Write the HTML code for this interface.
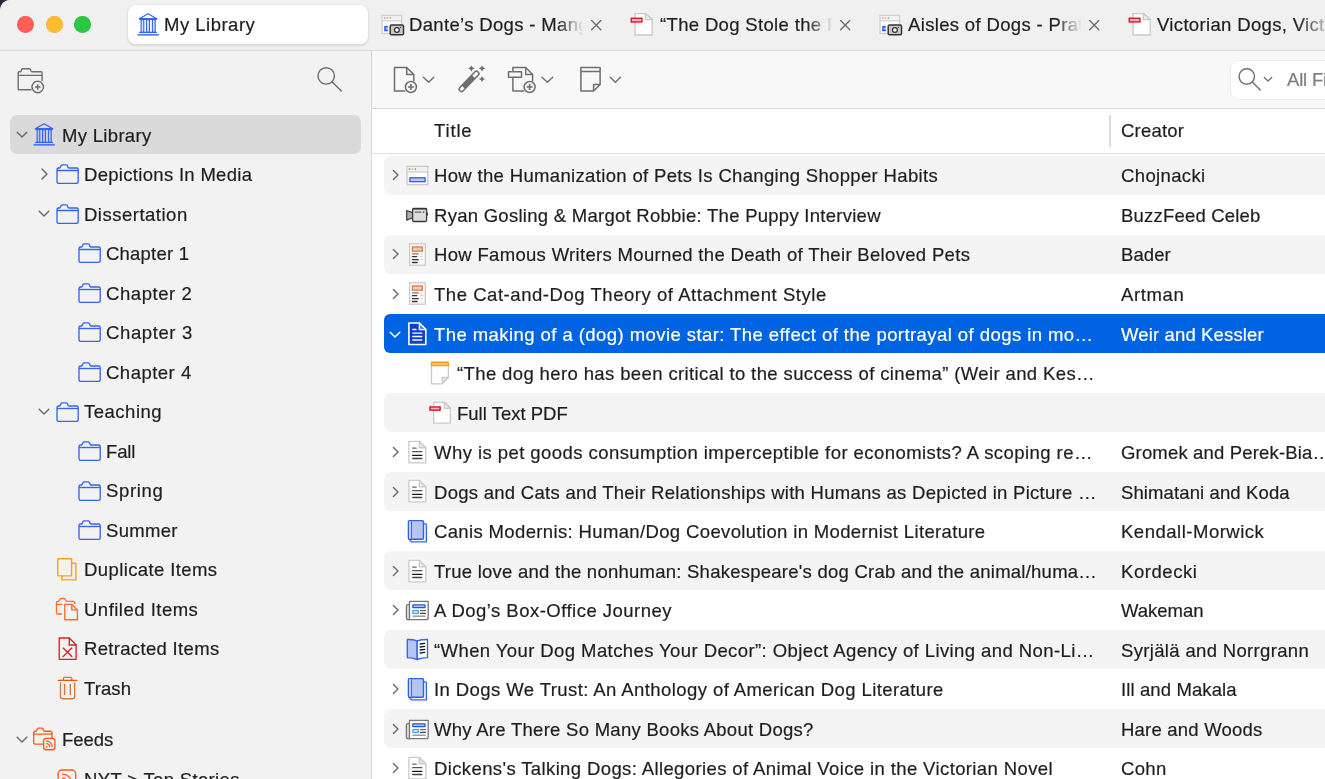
<!DOCTYPE html>
<html><head><meta charset="utf-8"><style>
html,body{margin:0;padding:0;width:1325px;height:779px;overflow:hidden;background:#232a36}
#win{position:absolute;left:0;top:0;width:1325px;height:779px;overflow:hidden;border-top-left-radius:10px;background:#f0f0f0}
.b{position:absolute}
.t{position:absolute;white-space:nowrap;font-family:"Liberation Sans",sans-serif;will-change:transform;-webkit-text-stroke:0.2px currentColor}
.i{position:absolute;overflow:visible}
</style></head><body>
<div id="win"><div class="b" style="left:0;top:0;width:1325px;height:50px;background:#f0f0f0;border-bottom:1px solid #d9d9d9"></div><div class="b" style="left:17.2px;top:15.7px;width:17px;height:17px;border-radius:50%;background:#ff5f57;box-shadow:inset 0 0 0 0.5px rgba(0,0,0,0.1)"></div><div class="b" style="left:45.5px;top:15.7px;width:17px;height:17px;border-radius:50%;background:#febc2e;box-shadow:inset 0 0 0 0.5px rgba(0,0,0,0.1)"></div><div class="b" style="left:73.8px;top:15.7px;width:17px;height:17px;border-radius:50%;background:#28c840;box-shadow:inset 0 0 0 0.5px rgba(0,0,0,0.1)"></div><div class="b" style="left:127.5px;top:4.8px;width:240px;height:39.4px;background:#fff;border-radius:7px;box-shadow:0 1px 3px rgba(0,0,0,0.16),0 0 0.5px rgba(0,0,0,0.2)"></div><svg class="i" style="left:134.00px;top:10.00px;" width="28" height="28" viewBox="0 0 28 28"><g fill="none" stroke="#3565ee" stroke-width="1.25" stroke-linejoin="round">
<path d="M5.3 8.7 L14.1 3.7 L22.8 8.7 Z" fill="#fff" fill-opacity="0"/>
<line x1="5.2" y1="9.3" x2="22.9" y2="9.3" stroke-width="1.5"/>
<rect x="7.1" y="9.6" width="2.7" height="12.6" fill="#3565ee" fill-opacity="0.22" stroke-width="1.1"/>
<rect x="12.5" y="9.6" width="3" height="12.6" fill="#3565ee" fill-opacity="0.22" stroke-width="1.1"/>
<rect x="18.4" y="9.6" width="2.8" height="12.6" fill="#3565ee" fill-opacity="0.22" stroke-width="1.1"/>
<line x1="5.2" y1="22.3" x2="22.9" y2="22.3" stroke-width="1.3"/>
</g><rect x="3.6" y="23.9" width="21.2" height="1.8" fill="#3565ee" opacity="0.85"/></svg><div class="t" style="left:164.00px;top:16px;font-size:18.5px;line-height:18.5px;letter-spacing:0.494px;color:#1e1e1e;">My Library</div><div class="t" style="left:409.3px;top:16px;width:180px;overflow:hidden;font-size:18.5px;line-height:18.5px;letter-spacing:0.34px;color:#1e1e1e;-webkit-mask-image:linear-gradient(90deg,#000 0,#000 148.5px,transparent 174.5px)">Dante’s Dogs - Mange Tales</div><svg class="i" style="left:378.00px;top:10.00px;" width="28" height="28" viewBox="0 0 28 28"><rect x="4.1" y="5.4" width="19.5" height="18" fill="#fff" stroke="#cdcdcd" stroke-width="1.3"/>
<rect x="4.75" y="6.05" width="18.2" height="4.7" fill="#f2f2f2"/>
<line x1="4.1" y1="10.8" x2="23.6" y2="10.8" stroke="#d2d2d2" stroke-width="1.3"/>
<circle cx="6.8" cy="7.9" r="0.8" fill="#eb8a8a"/><circle cx="9.5" cy="7.9" r="0.8" fill="#ebaa66"/><circle cx="12.4" cy="7.9" r="0.8" fill="#6cbf6a"/>
<path d="M9.8 16.6 H6.9 V20.5 H9.8" fill="#9cb6f6" stroke="#1b56e2" stroke-width="1.3"/>
<rect x="12.2" y="15.1" width="13.3" height="9.7" rx="1.4" fill="#c9c9c9" stroke="#333" stroke-width="1.5"/>
<circle cx="18.9" cy="20" r="2.4" fill="#fff" stroke="#333" stroke-width="1.3"/>
<circle cx="22.5" cy="17.4" r="0.6" fill="#333"/></svg><svg class="i" style="left:590.10px;top:18.50px;" width="12.5" height="12.5" viewBox="0 0 12.5 12.5"><path d="M1.6 1.6 L10.8 10.8 M10.8 1.6 L1.6 10.8" stroke="#6d6d6d" stroke-width="1.35" stroke-linecap="round"/></svg><div class="t" style="left:660.3px;top:16px;width:180px;overflow:hidden;font-size:18.5px;line-height:18.5px;letter-spacing:0.34px;color:#1e1e1e;-webkit-mask-image:linear-gradient(90deg,#000 0,#000 147px,transparent 173px)">“The Dog Stole the Film</div><svg class="i" style="left:627.00px;top:10.00px;" width="28" height="28" viewBox="0 0 28 28"><path d="M8.1 3.6 H18.3 L25.2 9.6 V25 H8.1 Z" fill="#fff" stroke="#c9c9c9" stroke-width="1.3" stroke-linejoin="round"/>
<path d="M18.3 3.6 V9.6 H25.2 Z" fill="#ececec" stroke="#c9c9c9" stroke-width="1.3" stroke-linejoin="round"/>
<rect x="4.25" y="8.25" width="10.70" height="3.70" fill="#f0b2ba" stroke="#d8121f" stroke-width="1.35" stroke-linejoin="miter"/></svg><svg class="i" style="left:838.60px;top:18.50px;" width="12.5" height="12.5" viewBox="0 0 12.5 12.5"><path d="M1.6 1.6 L10.8 10.8 M10.8 1.6 L1.6 10.8" stroke="#6d6d6d" stroke-width="1.35" stroke-linecap="round"/></svg><div class="t" style="left:907.8px;top:16px;width:180px;overflow:hidden;font-size:18.5px;line-height:18.5px;letter-spacing:0.34px;color:#1e1e1e;-webkit-mask-image:linear-gradient(90deg,#000 0,#000 147.5px,transparent 173.5px)">Aisles of Dogs - Pratt</div><svg class="i" style="left:875.50px;top:10.00px;" width="28" height="28" viewBox="0 0 28 28"><rect x="4.1" y="5.4" width="19.5" height="18" fill="#fff" stroke="#cdcdcd" stroke-width="1.3"/>
<rect x="4.75" y="6.05" width="18.2" height="4.7" fill="#f2f2f2"/>
<line x1="4.1" y1="10.8" x2="23.6" y2="10.8" stroke="#d2d2d2" stroke-width="1.3"/>
<circle cx="6.8" cy="7.9" r="0.8" fill="#eb8a8a"/><circle cx="9.5" cy="7.9" r="0.8" fill="#ebaa66"/><circle cx="12.4" cy="7.9" r="0.8" fill="#6cbf6a"/>
<path d="M9.8 16.6 H6.9 V20.5 H9.8" fill="#9cb6f6" stroke="#1b56e2" stroke-width="1.3"/>
<rect x="12.2" y="15.1" width="13.3" height="9.7" rx="1.4" fill="#c9c9c9" stroke="#333" stroke-width="1.5"/>
<circle cx="18.9" cy="20" r="2.4" fill="#fff" stroke="#333" stroke-width="1.3"/>
<circle cx="22.5" cy="17.4" r="0.6" fill="#333"/></svg><svg class="i" style="left:1087.70px;top:18.50px;" width="12.5" height="12.5" viewBox="0 0 12.5 12.5"><path d="M1.6 1.6 L10.8 10.8 M10.8 1.6 L1.6 10.8" stroke="#6d6d6d" stroke-width="1.35" stroke-linecap="round"/></svg><div class="t" style="left:1157.3px;top:16px;width:170px;overflow:hidden;font-size:18.5px;line-height:18.5px;letter-spacing:0.34px;color:#1e1e1e;-webkit-mask-image:linear-gradient(90deg,#000 0,#000 140px,transparent 178px)">Victorian Dogs, Victorian Men</div><svg class="i" style="left:1125.00px;top:10.00px;" width="28" height="28" viewBox="0 0 28 28"><path d="M8.1 3.6 H18.3 L25.2 9.6 V25 H8.1 Z" fill="#fff" stroke="#c9c9c9" stroke-width="1.3" stroke-linejoin="round"/>
<path d="M18.3 3.6 V9.6 H25.2 Z" fill="#ececec" stroke="#c9c9c9" stroke-width="1.3" stroke-linejoin="round"/>
<rect x="4.25" y="8.25" width="10.70" height="3.70" fill="#f0b2ba" stroke="#d8121f" stroke-width="1.35" stroke-linejoin="miter"/></svg><div class="b" style="left:0;top:51px;width:371px;height:728px;background:#f2f2f2"></div><div class="b" style="left:371px;top:51px;width:1px;height:728px;background:#d6d6d6"></div><svg class="i" style="left:10.00px;top:60.00px;" width="40" height="40" viewBox="0 0 40 40"><g fill="none" stroke="#6e6e6e" stroke-width="1.4" stroke-linejoin="round">
<path d="M21.6 29.8 H9.1 Q8.2 29.8 8.2 28.9 V12.7 Q8.2 11.8 9.1 11.8 H10.2 Q10.8 11.8 11.1 11.2 L11.6 9.6 Q12 8.7 12.8 8.7 H19.2 Q20 8.7 20.4 9.5 L21 11 Q21.4 11.8 22.2 11.8 H31.2 Q32.1 11.8 32.1 12.7 V21.3"/>
<line x1="8.2" y1="15.4" x2="32.1" y2="15.4"/>
<circle cx="27.7" cy="27" r="5.7"/>
<path d="M24.9 27 H30.5 M27.7 24.2 V29.8" stroke-width="1.5"/></g></svg><svg class="i" style="left:310.00px;top:60.00px;" width="40" height="40" viewBox="0 0 40 40"><circle cx="16.2" cy="15.9" r="8.2" fill="none" stroke="#6e6e6e" stroke-width="1.45"/><line x1="22.00" y1="21.70" x2="31.33" y2="31.03" stroke="#6e6e6e" stroke-width="1.45" stroke-linecap="round"/></svg><div class="b" style="left:372px;top:51px;width:953px;height:57px;background:#f8f8f8;border-bottom:1px solid #d9d9d9"></div><svg class="i" style="left:388.00px;top:62.00px;" width="50" height="36" viewBox="0 0 50 36"><g fill="none" stroke="#6e6e6e" stroke-width="1.5" stroke-linejoin="round">
<path d="M17.5 29.1 H6.5 V5.5 H18.7 L25.8 12.6 V19.6"/>
<path d="M18.7 5.5 V12.6 H25.8"/>
<circle cx="22.9" cy="25" r="5.5"/>
<path d="M19.9 25 H25.9 M22.9 22.1 V27.9" stroke-width="1.7"/></g><path d="M35.4 15.2 L40.6 20.3 L45.80 15.2" fill="none" stroke="#6e6e6e" stroke-width="1.4" stroke-linecap="round" stroke-linejoin="round"/></svg><svg class="i" style="left:452.00px;top:62.00px;" width="40" height="36" viewBox="0 0 40 36"><g transform="translate(17 19.3) rotate(-46)">
<rect x="-13" y="-2.35" width="26" height="4.7" rx="1.9" fill="none" stroke="#6e6e6e" stroke-width="1.5"/>
<rect x="-8.2" y="-2.35" width="14.6" height="4.7" fill="#6e6e6e"/></g>
<g fill="#6e6e6e"><path d="M19.4 3.3 Q19.95 5.95 22.599999999999998 6.5 Q19.95 7.05 19.4 9.7 Q18.849999999999998 7.05 16.2 6.5 Q18.849999999999998 5.95 19.4 3.3 Z"/><path d="M30 3.3 Q30.55 5.95 33.2 6.5 Q30.55 7.05 30 9.7 Q29.45 7.05 26.8 6.5 Q29.45 5.95 30 3.3 Z"/><path d="M30 13.900000000000002 Q30.55 16.55 33.2 17.1 Q30.55 17.650000000000002 30 20.3 Q29.45 17.650000000000002 26.8 17.1 Q29.45 16.55 30 13.900000000000002 Z"/></g></svg><svg class="i" style="left:503.00px;top:62.00px;" width="54" height="36" viewBox="0 0 54 36"><g fill="none" stroke="#6e6e6e" stroke-width="1.5" stroke-linejoin="round">
<path d="M21.2 29.1 H9.9 V15.3"/><path d="M9.9 9.7 V5.5 H22.7 L29.6 12.6 V19.6"/>
<path d="M22.7 5.5 V12.6 H29.6"/>
<rect x="5.5" y="9.7" width="13" height="5.6"/>
<circle cx="26.6" cy="25" r="5.5"/>
<path d="M23.6 25 H29.6 M26.6 22.1 V27.9" stroke-width="1.7"/></g><path d="M39 15.2 L44.4 20.3 L49.80 15.2" fill="none" stroke="#6e6e6e" stroke-width="1.4" stroke-linecap="round" stroke-linejoin="round"/></svg><svg class="i" style="left:574.00px;top:62.00px;" width="52" height="36" viewBox="0 0 52 36"><g fill="none" stroke="#6e6e6e" stroke-width="1.5" stroke-linejoin="round">
<path d="M6.9 5.5 H26.1 V22.4 L19.6 29.1 H6.9 Z"/>
<line x1="6.9" y1="9.5" x2="26.1" y2="9.5"/>
<path d="M19.6 29.1 V22.4 H26.1"/></g><path d="M36.3 15.2 L41.4 20.3 L46.50 15.2" fill="none" stroke="#6e6e6e" stroke-width="1.4" stroke-linecap="round" stroke-linejoin="round"/></svg><div class="b" style="left:1231px;top:60.5px;width:110px;height:38px;background:#fff;border-radius:7px;box-shadow:0 0 0 0.6px #e6e6e6"></div><svg class="i" style="left:1225.00px;top:55.00px;" width="60" height="50" viewBox="0 0 60 50"><circle cx="21.8" cy="21.5" r="7.7" fill="none" stroke="#6e6e6e" stroke-width="1.4"/><line x1="27.24" y1="26.94" x2="35.24" y2="34.94" stroke="#6e6e6e" stroke-width="1.4" stroke-linecap="round"/><path d="M39.3 22.5 L43 26 L46.7 22.5" fill="none" stroke="#6e6e6e" stroke-width="1.3" stroke-linecap="round" stroke-linejoin="round"/></svg><div class="t" style="left:1287.00px;top:71px;font-size:18.5px;line-height:18.5px;letter-spacing:-0.2px;color:#7d7d7d;">All Fields &amp; Tags</div><div class="b" style="left:372px;top:109px;width:953px;height:44px;background:#fff;border-bottom:1px solid #e1e1e1"></div><div class="b" style="left:372px;top:154px;width:953px;height:625px;background:#fff"></div><div class="t" style="left:434.00px;top:122px;font-size:18.5px;line-height:18.5px;letter-spacing:0.84px;color:#1e1e1e;">Title</div><div class="b" style="left:1109.4px;top:115px;width:1.2px;height:31.5px;background:#dcdcdc"></div><div class="t" style="left:1121.30px;top:122px;font-size:18.5px;line-height:18.5px;letter-spacing:0.206px;color:#1e1e1e;">Creator</div><div class="b" style="left:10.3px;top:114.8px;width:350.7px;height:39.1px;background:#dadada;border-radius:7px"></div><svg class="i" style="left:15.50px;top:130.00px;" width="12" height="9" viewBox="0 0 12 9"><path d="M1.2 2.3 L6 7 L10.8 2.3" fill="none" stroke="#6b6b6b" stroke-width="1.45" stroke-linecap="round" stroke-linejoin="round"/></svg><svg class="i" style="left:30.40px;top:119.50px;" width="28" height="28" viewBox="0 0 28 28"><g fill="none" stroke="#3565ee" stroke-width="1.25" stroke-linejoin="round">
<path d="M5.3 8.7 L14.1 3.7 L22.8 8.7 Z" fill="#fff" fill-opacity="0"/>
<line x1="5.2" y1="9.3" x2="22.9" y2="9.3" stroke-width="1.5"/>
<rect x="7.1" y="9.6" width="2.7" height="12.6" fill="#3565ee" fill-opacity="0.22" stroke-width="1.1"/>
<rect x="12.5" y="9.6" width="3" height="12.6" fill="#3565ee" fill-opacity="0.22" stroke-width="1.1"/>
<rect x="18.4" y="9.6" width="2.8" height="12.6" fill="#3565ee" fill-opacity="0.22" stroke-width="1.1"/>
<line x1="5.2" y1="22.3" x2="22.9" y2="22.3" stroke-width="1.3"/>
</g><rect x="3.6" y="23.9" width="21.2" height="1.8" fill="#3565ee" opacity="0.85"/></svg><div class="t" style="left:61.50px;top:127px;font-size:18.5px;line-height:18.5px;letter-spacing:0.316px;color:#1e1e1e;">My Library</div><svg class="i" style="left:39.30px;top:167.33px;" width="10" height="14" viewBox="0 0 10 14"><path d="M3 2 L8 7 L3 12" fill="none" stroke="#6b6b6b" stroke-width="1.45" stroke-linecap="round" stroke-linejoin="round"/></svg><svg class="i" style="left:51.70px;top:159.33px;" width="30" height="30" viewBox="0 0 30 30"><g fill="none" stroke="#3565ee" stroke-width="1.35" stroke-linejoin="round">
<path d="M5 10.5 Q5 9 6.5 9 L7.3 9 Q7.9 9 8.2 8.4 L9 6.6 Q9.4 5.8 10.2 5.8 L14.2 5.8 Q15 5.8 15.3 6.6 L16.1 8.4 Q16.4 9 17.1 9 L24.7 9 Q26.2 9 26.2 10.5 L26.2 22.8 Q26.2 24.3 24.7 24.3 L6.5 24.3 Q5 24.3 5 22.8 Z"/>
<line x1="5" y1="11.5" x2="26.2" y2="11.5"/></g></svg><div class="t" style="left:83.90px;top:166px;font-size:18.5px;line-height:18.5px;letter-spacing:0.307px;color:#1e1e1e;">Depictions In Media</div><svg class="i" style="left:38.30px;top:209.06px;" width="12" height="9" viewBox="0 0 12 9"><path d="M1.2 2.3 L6 7 L10.8 2.3" fill="none" stroke="#6b6b6b" stroke-width="1.45" stroke-linecap="round" stroke-linejoin="round"/></svg><svg class="i" style="left:51.70px;top:198.86px;" width="30" height="30" viewBox="0 0 30 30"><g fill="none" stroke="#3565ee" stroke-width="1.35" stroke-linejoin="round">
<path d="M5 10.5 Q5 9 6.5 9 L7.3 9 Q7.9 9 8.2 8.4 L9 6.6 Q9.4 5.8 10.2 5.8 L14.2 5.8 Q15 5.8 15.3 6.6 L16.1 8.4 Q16.4 9 17.1 9 L24.7 9 Q26.2 9 26.2 10.5 L26.2 22.8 Q26.2 24.3 24.7 24.3 L6.5 24.3 Q5 24.3 5 22.8 Z"/>
<line x1="5" y1="11.5" x2="26.2" y2="11.5"/></g></svg><div class="t" style="left:83.90px;top:206px;font-size:18.5px;line-height:18.5px;letter-spacing:0.502px;color:#1e1e1e;">Dissertation</div><svg class="i" style="left:74.00px;top:238.39px;" width="30" height="30" viewBox="0 0 30 30"><g fill="none" stroke="#3565ee" stroke-width="1.35" stroke-linejoin="round">
<path d="M5 10.5 Q5 9 6.5 9 L7.3 9 Q7.9 9 8.2 8.4 L9 6.6 Q9.4 5.8 10.2 5.8 L14.2 5.8 Q15 5.8 15.3 6.6 L16.1 8.4 Q16.4 9 17.1 9 L24.7 9 Q26.2 9 26.2 10.5 L26.2 22.8 Q26.2 24.3 24.7 24.3 L6.5 24.3 Q5 24.3 5 22.8 Z"/>
<line x1="5" y1="11.5" x2="26.2" y2="11.5"/></g></svg><div class="t" style="left:106.20px;top:245px;font-size:18.5px;line-height:18.5px;letter-spacing:0.216px;color:#1e1e1e;">Chapter 1</div><svg class="i" style="left:74.00px;top:277.92px;" width="30" height="30" viewBox="0 0 30 30"><g fill="none" stroke="#3565ee" stroke-width="1.35" stroke-linejoin="round">
<path d="M5 10.5 Q5 9 6.5 9 L7.3 9 Q7.9 9 8.2 8.4 L9 6.6 Q9.4 5.8 10.2 5.8 L14.2 5.8 Q15 5.8 15.3 6.6 L16.1 8.4 Q16.4 9 17.1 9 L24.7 9 Q26.2 9 26.2 10.5 L26.2 22.8 Q26.2 24.3 24.7 24.3 L6.5 24.3 Q5 24.3 5 22.8 Z"/>
<line x1="5" y1="11.5" x2="26.2" y2="11.5"/></g></svg><div class="t" style="left:106.20px;top:285px;font-size:18.5px;line-height:18.5px;letter-spacing:0.565px;color:#1e1e1e;">Chapter 2</div><svg class="i" style="left:74.00px;top:317.45px;" width="30" height="30" viewBox="0 0 30 30"><g fill="none" stroke="#3565ee" stroke-width="1.35" stroke-linejoin="round">
<path d="M5 10.5 Q5 9 6.5 9 L7.3 9 Q7.9 9 8.2 8.4 L9 6.6 Q9.4 5.8 10.2 5.8 L14.2 5.8 Q15 5.8 15.3 6.6 L16.1 8.4 Q16.4 9 17.1 9 L24.7 9 Q26.2 9 26.2 10.5 L26.2 22.8 Q26.2 24.3 24.7 24.3 L6.5 24.3 Q5 24.3 5 22.8 Z"/>
<line x1="5" y1="11.5" x2="26.2" y2="11.5"/></g></svg><div class="t" style="left:106.20px;top:324px;font-size:18.5px;line-height:18.5px;letter-spacing:0.615px;color:#1e1e1e;">Chapter 3</div><svg class="i" style="left:74.00px;top:356.98px;" width="30" height="30" viewBox="0 0 30 30"><g fill="none" stroke="#3565ee" stroke-width="1.35" stroke-linejoin="round">
<path d="M5 10.5 Q5 9 6.5 9 L7.3 9 Q7.9 9 8.2 8.4 L9 6.6 Q9.4 5.8 10.2 5.8 L14.2 5.8 Q15 5.8 15.3 6.6 L16.1 8.4 Q16.4 9 17.1 9 L24.7 9 Q26.2 9 26.2 10.5 L26.2 22.8 Q26.2 24.3 24.7 24.3 L6.5 24.3 Q5 24.3 5 22.8 Z"/>
<line x1="5" y1="11.5" x2="26.2" y2="11.5"/></g></svg><div class="t" style="left:106.20px;top:364px;font-size:18.5px;line-height:18.5px;letter-spacing:0.49px;color:#1e1e1e;">Chapter 4</div><svg class="i" style="left:38.30px;top:406.71px;" width="12" height="9" viewBox="0 0 12 9"><path d="M1.2 2.3 L6 7 L10.8 2.3" fill="none" stroke="#6b6b6b" stroke-width="1.45" stroke-linecap="round" stroke-linejoin="round"/></svg><svg class="i" style="left:51.70px;top:396.51px;" width="30" height="30" viewBox="0 0 30 30"><g fill="none" stroke="#3565ee" stroke-width="1.35" stroke-linejoin="round">
<path d="M5 10.5 Q5 9 6.5 9 L7.3 9 Q7.9 9 8.2 8.4 L9 6.6 Q9.4 5.8 10.2 5.8 L14.2 5.8 Q15 5.8 15.3 6.6 L16.1 8.4 Q16.4 9 17.1 9 L24.7 9 Q26.2 9 26.2 10.5 L26.2 22.8 Q26.2 24.3 24.7 24.3 L6.5 24.3 Q5 24.3 5 22.8 Z"/>
<line x1="5" y1="11.5" x2="26.2" y2="11.5"/></g></svg><div class="t" style="left:83.90px;top:403px;font-size:18.5px;line-height:18.5px;letter-spacing:0.511px;color:#1e1e1e;">Teaching</div><svg class="i" style="left:74.00px;top:436.04px;" width="30" height="30" viewBox="0 0 30 30"><g fill="none" stroke="#3565ee" stroke-width="1.35" stroke-linejoin="round">
<path d="M5 10.5 Q5 9 6.5 9 L7.3 9 Q7.9 9 8.2 8.4 L9 6.6 Q9.4 5.8 10.2 5.8 L14.2 5.8 Q15 5.8 15.3 6.6 L16.1 8.4 Q16.4 9 17.1 9 L24.7 9 Q26.2 9 26.2 10.5 L26.2 22.8 Q26.2 24.3 24.7 24.3 L6.5 24.3 Q5 24.3 5 22.8 Z"/>
<line x1="5" y1="11.5" x2="26.2" y2="11.5"/></g></svg><div class="t" style="left:106.20px;top:443px;font-size:18.5px;line-height:18.5px;letter-spacing:-0.126px;color:#1e1e1e;">Fall</div><svg class="i" style="left:74.00px;top:475.57px;" width="30" height="30" viewBox="0 0 30 30"><g fill="none" stroke="#3565ee" stroke-width="1.35" stroke-linejoin="round">
<path d="M5 10.5 Q5 9 6.5 9 L7.3 9 Q7.9 9 8.2 8.4 L9 6.6 Q9.4 5.8 10.2 5.8 L14.2 5.8 Q15 5.8 15.3 6.6 L16.1 8.4 Q16.4 9 17.1 9 L24.7 9 Q26.2 9 26.2 10.5 L26.2 22.8 Q26.2 24.3 24.7 24.3 L6.5 24.3 Q5 24.3 5 22.8 Z"/>
<line x1="5" y1="11.5" x2="26.2" y2="11.5"/></g></svg><div class="t" style="left:106.20px;top:482px;font-size:18.5px;line-height:18.5px;letter-spacing:0.66px;color:#1e1e1e;">Spring</div><svg class="i" style="left:74.00px;top:515.10px;" width="30" height="30" viewBox="0 0 30 30"><g fill="none" stroke="#3565ee" stroke-width="1.35" stroke-linejoin="round">
<path d="M5 10.5 Q5 9 6.5 9 L7.3 9 Q7.9 9 8.2 8.4 L9 6.6 Q9.4 5.8 10.2 5.8 L14.2 5.8 Q15 5.8 15.3 6.6 L16.1 8.4 Q16.4 9 17.1 9 L24.7 9 Q26.2 9 26.2 10.5 L26.2 22.8 Q26.2 24.3 24.7 24.3 L6.5 24.3 Q5 24.3 5 22.8 Z"/>
<line x1="5" y1="11.5" x2="26.2" y2="11.5"/></g></svg><div class="t" style="left:106.20px;top:522px;font-size:18.5px;line-height:18.5px;letter-spacing:0.3px;color:#1e1e1e;">Summer</div><svg class="i" style="left:52.00px;top:554.03px;" width="30" height="30" viewBox="0 0 30 30"><g fill="none" stroke="#f6a11e" stroke-width="1.4" stroke-linejoin="round">
<rect x="5.75" y="4.7" width="13.85" height="17.2" rx="0.6"/>
<path d="M19.6 9.2 H23.9 V25.9 H9.9 V21.9"/></g></svg><div class="t" style="left:83.90px;top:561px;font-size:18.5px;line-height:18.5px;letter-spacing:0.398px;color:#1e1e1e;">Duplicate Items</div><svg class="i" style="left:52.00px;top:593.96px;" width="30" height="30" viewBox="0 0 30 30"><g fill="none" stroke="#ff6a30" stroke-width="1.35" stroke-linejoin="round" stroke-linecap="round">
<path d="M9.6 20 H5.8 Q4.5 20 4.5 18.7 V8.7 Q4.5 7.4 5.8 7.4 H6.3 Q6.9 7.4 7.2 6.8 L8 5.3 Q8.4 4.5 9.2 4.5 H12 Q12.8 4.5 13.2 5.3 L14 6.8 Q14.3 7.4 15 7.4 H21.4 Q22.7 7.4 22.7 8.7 V9.4"/>
<line x1="4.5" y1="10.3" x2="9.6" y2="10.3"/>
<path d="M12.8 10.3 H19.8 L25.4 15.9 V25.7 H12.8 Z"/>
<path d="M19.8 10.3 V15.9 H25.4"/></g></svg><div class="t" style="left:83.90px;top:601px;font-size:18.5px;line-height:18.5px;letter-spacing:0.489px;color:#1e1e1e;">Unfiled Items</div><svg class="i" style="left:52.00px;top:632.99px;" width="30" height="30" viewBox="0 0 30 30"><g fill="none" stroke="#d9212c" stroke-width="1.35" stroke-linejoin="round" stroke-linecap="round">
<path d="M7.2 5 H17.3 L24.1 12 V26.3 H7.2 Z"/>
<path d="M17.3 5 V12 H24.1"/>
<path d="M11.2 15.1 L19.8 23.6 M19.8 15.1 L11.2 23.6"/></g></svg><div class="t" style="left:83.90px;top:640px;font-size:18.5px;line-height:18.5px;letter-spacing:0.327px;color:#1e1e1e;">Retracted Items</div><svg class="i" style="left:52.00px;top:673.02px;" width="30" height="30" viewBox="0 0 30 30"><g fill="none" stroke="#d9773f" stroke-width="1.35" stroke-linecap="round" stroke-linejoin="round">
<path d="M11.4 7.2 V5.4 Q11.4 4.4 12.4 4.4 H18.8 Q19.8 4.4 19.8 5.4 V7.2"/>
<path d="M8.5 10 V23.4 Q8.5 25.7 10.8 25.7 H20.4 Q22.7 25.7 22.7 23.4 V10"/>
<line x1="12.6" y1="11.3" x2="12.6" y2="21.6"/><line x1="18.3" y1="11.3" x2="18.3" y2="21.6"/>
</g><line x1="6.3" y1="7.4" x2="24.8" y2="7.4" stroke="#d85a1a" stroke-width="1.4" stroke-linecap="round"/></svg><div class="t" style="left:83.90px;top:680px;font-size:18.5px;line-height:18.5px;letter-spacing:0.09px;color:#1e1e1e;">Trash</div><svg class="i" style="left:15.60px;top:735.30px;" width="12" height="9" viewBox="0 0 12 9"><path d="M1.2 2.3 L6 7 L10.8 2.3" fill="none" stroke="#6b6b6b" stroke-width="1.45" stroke-linecap="round" stroke-linejoin="round"/></svg><svg class="i" style="left:29.00px;top:724.00px;" width="32" height="32" viewBox="0 0 32 32"><g fill="none" stroke="#ff5a1f" stroke-width="1.35" stroke-linejoin="round" stroke-linecap="round">
<path d="M14.2 20.1 H6.2 Q4.7 20.1 4.7 18.6 V8.7 Q4.7 7.2 6.2 7.2 H6.8 Q7.4 7.2 7.7 6.6 L8.4 4.9 Q8.8 4.1 9.6 4.1 H12.9 Q13.7 4.1 14.1 4.9 L14.8 6.6 Q15.1 7.2 15.8 7.2 H21.5 Q23 7.2 23 8.7 V13.6"/>
<line x1="4.7" y1="10.1" x2="23" y2="10.1"/></g><rect x="14.6" y="14.4" width="11.3" height="11.3" rx="2.49" fill="none" stroke="#ff5a1f" stroke-width="1.35"/>
<circle cx="17.76" cy="22.76" r="0.85" fill="#ff5a1f"/>
<path d="M17.54 19.71 A3.05 3.05 0 0 1 20.59 22.76" fill="none" stroke="#ff5a1f" stroke-width="1.3" stroke-linecap="round"/>
<path d="M17.54 17.11 A5.65 5.65 0 0 1 23.19 22.76" fill="none" stroke="#ff5a1f" stroke-width="1.3" stroke-linecap="round"/></svg><div class="t" style="left:61.50px;top:731px;font-size:18.5px;line-height:18.5px;letter-spacing:-0.06px;color:#1e1e1e;">Feeds</div><svg class="i" style="left:52.00px;top:759.00px;" width="40" height="30" viewBox="0 0 40 30"><rect x="6.1000000000000005" y="11.0" width="17.6" height="17.6" rx="3.87" fill="none" stroke="#ff5a1f" stroke-width="1.35"/>
<circle cx="11.03" cy="24.02" r="1.32" fill="#ff5a1f"/>
<path d="M10.68 19.27 A4.75 4.75 0 0 1 15.43 24.02" fill="none" stroke="#ff5a1f" stroke-width="1.3" stroke-linecap="round"/>
<path d="M10.68 15.22 A8.80 8.80 0 0 1 19.48 24.02" fill="none" stroke="#ff5a1f" stroke-width="1.3" stroke-linecap="round"/></svg><div class="t" style="left:83.90px;top:771px;font-size:18.5px;line-height:18.5px;letter-spacing:0.34px;color:#1e1e1e;">NYT &gt; Top Stories</div><div class="b" style="left:383.7px;top:155.80px;width:960px;height:39.2px;background:#f4f4f4;border-radius:7px"></div><svg class="i" style="left:389.60px;top:168.40px;" width="10" height="14" viewBox="0 0 10 14"><path d="M3.4000000000000004 2.4000000000000004 L8 7 L3.4000000000000004 11.6" fill="none" stroke="#6b6b6b" stroke-width="1.4" stroke-linecap="round" stroke-linejoin="round"/></svg><svg class="i" style="left:403.00px;top:161.20px;" width="28" height="28" viewBox="0 0 28 28"><rect x="4" y="5.4" width="20.8" height="18.2" fill="#fff" stroke="#c9c9c9" stroke-width="1.3"/>
<rect x="4.65" y="6.05" width="19.5" height="4.9" fill="#f1f1f1"/>
<line x1="4" y1="11" x2="24.8" y2="11" stroke="#cdcdcd" stroke-width="1.3"/>
<circle cx="6.5" cy="8.1" r="0.8" fill="#e2504c"/><circle cx="9.4" cy="8.1" r="0.8" fill="#e9a13b"/><circle cx="12.4" cy="8.1" r="0.8" fill="#4aaa48"/>
<rect x="6.9" y="16.8" width="15.2" height="3.9" fill="#b7c8f6" stroke="#1b56e2" stroke-width="1.2"/></svg><div class="t" style="left:434.00px;top:167px;font-size:18.5px;line-height:18.5px;letter-spacing:0.34px;color:#1e1e1e;">How the Humanization of Pets Is Changing Shopper Habits</div><div class="t" style="left:1121.30px;top:167px;font-size:18.5px;line-height:18.5px;letter-spacing:0.365px;color:#1e1e1e;">Chojnacki</div><svg class="i" style="left:403.00px;top:201.03px;" width="28" height="28" viewBox="0 0 28 28"><path d="M3.7 9.5 L9.6 11.6 V16.8 L3.7 19.1 Z" fill="#b0b0b0" stroke="#3a3a3a" stroke-width="1.2" stroke-linejoin="round"/>
<path d="M23.4 10.9 Q26.3 13.1 23.4 15.2 Z" fill="#333" stroke="#333" stroke-width="0.8"/>
<rect x="9.6" y="7.5" width="14" height="13" rx="1.2" fill="#dcdcdc" stroke="#393939" stroke-width="1.3"/>
<line x1="9.8" y1="8" x2="23.4" y2="8" stroke="#222" stroke-width="0.8"/>
<line x1="12.3" y1="11.1" x2="18" y2="11.1" stroke="#666" stroke-width="1.3" stroke-linecap="round"/>
<circle cx="20.6" cy="11.2" r="0.85" fill="#e22"/></svg><div class="t" style="left:434.00px;top:207px;font-size:18.5px;line-height:18.5px;letter-spacing:0.269px;color:#1e1e1e;">Ryan Gosling &amp; Margot Robbie: The Puppy Interview</div><div class="t" style="left:1121.30px;top:207px;font-size:18.5px;line-height:18.5px;letter-spacing:0.202px;color:#1e1e1e;">BuzzFeed Celeb</div><div class="b" style="left:383.7px;top:234.86px;width:960px;height:39.2px;background:#f4f4f4;border-radius:7px"></div><svg class="i" style="left:389.60px;top:247.46px;" width="10" height="14" viewBox="0 0 10 14"><path d="M3.4000000000000004 2.4000000000000004 L8 7 L3.4000000000000004 11.6" fill="none" stroke="#6b6b6b" stroke-width="1.4" stroke-linecap="round" stroke-linejoin="round"/></svg><svg class="i" style="left:403.00px;top:239.96px;" width="28" height="28" viewBox="0 0 28 28"><rect x="6.65" y="3.8" width="15.65" height="21.4" fill="#fff" stroke="#c9c9c9" stroke-width="1.3"/>
<rect x="9.4" y="6.9" width="10" height="4.3" fill="#f3cbb0" stroke="#d9773f" stroke-width="1.2"/>
<g stroke-width="1.3" stroke-linecap="round">
<line x1="9.4" y1="13.8" x2="15.3" y2="13.8" stroke="#7a7a7a"/>
<line x1="9.4" y1="16.7" x2="13.7" y2="16.7" stroke="#333"/>
<line x1="9.4" y1="19.6" x2="15.3" y2="19.6" stroke="#333"/>
<line x1="9.4" y1="22.5" x2="14.2" y2="22.5" stroke="#333"/>
<line x1="17.7" y1="13.8" x2="19.5" y2="13.8" stroke="#d6d6d6"/>
<line x1="17.7" y1="16.7" x2="19.5" y2="16.7" stroke="#d6d6d6"/>
<line x1="17.7" y1="19.6" x2="19.5" y2="19.6" stroke="#d6d6d6"/></g></svg><div class="t" style="left:434.00px;top:246px;font-size:18.5px;line-height:18.5px;letter-spacing:0.322px;color:#1e1e1e;">How Famous Writers Mourned the Death of Their Beloved Pets</div><div class="t" style="left:1121.30px;top:246px;font-size:18.5px;line-height:18.5px;letter-spacing:0.09px;color:#1e1e1e;">Bader</div><svg class="i" style="left:389.60px;top:286.99px;" width="10" height="14" viewBox="0 0 10 14"><path d="M3.4000000000000004 2.4000000000000004 L8 7 L3.4000000000000004 11.6" fill="none" stroke="#6b6b6b" stroke-width="1.4" stroke-linecap="round" stroke-linejoin="round"/></svg><svg class="i" style="left:403.00px;top:279.49px;" width="28" height="28" viewBox="0 0 28 28"><rect x="6.65" y="3.8" width="15.65" height="21.4" fill="#fff" stroke="#c9c9c9" stroke-width="1.3"/>
<rect x="9.4" y="6.9" width="10" height="4.3" fill="#f3cbb0" stroke="#d9773f" stroke-width="1.2"/>
<g stroke-width="1.3" stroke-linecap="round">
<line x1="9.4" y1="13.8" x2="15.3" y2="13.8" stroke="#7a7a7a"/>
<line x1="9.4" y1="16.7" x2="13.7" y2="16.7" stroke="#333"/>
<line x1="9.4" y1="19.6" x2="15.3" y2="19.6" stroke="#333"/>
<line x1="9.4" y1="22.5" x2="14.2" y2="22.5" stroke="#333"/>
<line x1="17.7" y1="13.8" x2="19.5" y2="13.8" stroke="#d6d6d6"/>
<line x1="17.7" y1="16.7" x2="19.5" y2="16.7" stroke="#d6d6d6"/>
<line x1="17.7" y1="19.6" x2="19.5" y2="19.6" stroke="#d6d6d6"/></g></svg><div class="t" style="left:434.00px;top:286px;font-size:18.5px;line-height:18.5px;letter-spacing:0.545px;color:#1e1e1e;">The Cat-and-Dog Theory of Attachment Style</div><div class="t" style="left:1121.30px;top:286px;font-size:18.5px;line-height:18.5px;letter-spacing:0.62px;color:#1e1e1e;">Artman</div><div class="b" style="left:383.7px;top:313.72px;width:960px;height:39.5px;background:#0063e1;border-radius:6px"></div><svg class="i" style="left:388.80px;top:329.92px;" width="12" height="9" viewBox="0 0 12 9"><path d="M1.2 2.3 L6 7 L10.8 2.3" fill="none" stroke="#fff" stroke-width="1.5" stroke-linecap="round" stroke-linejoin="round"/></svg><svg class="i" style="left:403.00px;top:320.02px;" width="28" height="28" viewBox="0 0 28 28"><path d="M5.9 3 H16.4 L22.8 9.6 V24.5 H5.9 Z" fill="#0b3fd0" stroke="#fff" stroke-width="1.6" stroke-linejoin="round"/>
<path d="M16.4 3 V9.6 H22.8 Z" fill="#3c8ae8" stroke="#fff" stroke-width="1.4" stroke-linejoin="round"/>
<g stroke="#fff" stroke-width="1.3" stroke-linecap="round">
<line x1="9.8" y1="9.5" x2="13" y2="9.5"/><line x1="9.8" y1="13.1" x2="18.8" y2="13.1"/>
<line x1="9.8" y1="16.5" x2="18.8" y2="16.5"/><line x1="9.8" y1="20" x2="18.8" y2="20"/></g></svg><div class="t" style="left:434.00px;top:326px;font-size:18.5px;line-height:18.5px;letter-spacing:0.433px;color:#fff;">The making of a (dog) movie star: The effect of the portrayal of dogs in mo…</div><div class="t" style="left:1121.30px;top:326px;font-size:18.5px;line-height:18.5px;letter-spacing:0.14px;color:#fff;">Weir and Kessler</div><svg class="i" style="left:425.00px;top:359.05px;" width="28" height="28" viewBox="0 0 28 28"><path d="M6.5 3.2 H23.4 V18.3 L17.2 24.8 H6.5 Z" fill="#fff" stroke="#c9c9c9" stroke-width="1.3" stroke-linejoin="round"/>
<path d="M17.2 24.8 V18.3 H23.4 Z" fill="#e8e8e8" stroke="#c9c9c9" stroke-width="1.3" stroke-linejoin="round"/>
<rect x="6.5" y="3.3" width="16.9" height="3.4" fill="#f9c66a" stroke="#f5a01e" stroke-width="1.3"/></svg><div class="t" style="left:457.00px;top:365px;font-size:18.5px;line-height:18.5px;letter-spacing:0.382px;color:#1e1e1e;">“The dog hero has been critical to the success of cinema” (Weir and Kes…</div><div class="b" style="left:383.7px;top:392.98px;width:960px;height:39.2px;background:#f4f4f4;border-radius:7px"></div><svg class="i" style="left:425.00px;top:397.98px;" width="28" height="28" viewBox="0 0 28 28"><path d="M8.6 4.3 H19.4 L25.4 10.3 V25.2 H8.6 Z" fill="#fff" stroke="#c9c9c9" stroke-width="1.3" stroke-linejoin="round"/>
<path d="M19.4 4.3 V10.3 H25.4 Z" fill="#ececec" stroke="#c9c9c9" stroke-width="1.3" stroke-linejoin="round"/>
<rect x="4.95" y="8.950000000000001" width="10.20" height="3.20" fill="#f0b2ba" stroke="#d8121f" stroke-width="1.35" stroke-linejoin="miter"/></svg><div class="t" style="left:457.00px;top:405px;font-size:18.5px;line-height:18.5px;letter-spacing:0.007px;color:#1e1e1e;">Full Text PDF</div><svg class="i" style="left:389.60px;top:445.11px;" width="10" height="14" viewBox="0 0 10 14"><path d="M3.4000000000000004 2.4000000000000004 L8 7 L3.4000000000000004 11.6" fill="none" stroke="#6b6b6b" stroke-width="1.4" stroke-linecap="round" stroke-linejoin="round"/></svg><svg class="i" style="left:403.00px;top:437.91px;" width="28" height="28" viewBox="0 0 28 28"><path d="M5.9 3.4 H16.3 L22.8 9.9 V24.8 H5.9 Z" fill="#fff" stroke="#c9c9c9" stroke-width="1.3" stroke-linejoin="round"/>
<path d="M16.3 3.4 V9.9 H22.8 Z" fill="#e6e6e6" stroke="#c9c9c9" stroke-width="1.3" stroke-linejoin="round"/>
<g stroke-width="1.3" stroke-linecap="round">
<line x1="9.7" y1="10.1" x2="13.2" y2="10.1" stroke="#666"/><line x1="9.7" y1="13.7" x2="18.8" y2="13.7" stroke="#555"/>
<line x1="9.7" y1="17.4" x2="18.8" y2="17.4" stroke="#111"/><line x1="9.7" y1="20.5" x2="18.8" y2="20.5" stroke="#444"/></g></svg><div class="t" style="left:434.00px;top:444px;font-size:18.5px;line-height:18.5px;letter-spacing:0.439px;color:#1e1e1e;">Why is pet goods consumption imperceptible for economists? A scoping re…</div><div class="t" style="left:1121.30px;top:444px;font-size:18.5px;line-height:18.5px;letter-spacing:0.17px;color:#1e1e1e;">Gromek and Perek-Bia…</div><div class="b" style="left:383.7px;top:472.04px;width:960px;height:39.2px;background:#f4f4f4;border-radius:7px"></div><svg class="i" style="left:389.60px;top:484.64px;" width="10" height="14" viewBox="0 0 10 14"><path d="M3.4000000000000004 2.4000000000000004 L8 7 L3.4000000000000004 11.6" fill="none" stroke="#6b6b6b" stroke-width="1.4" stroke-linecap="round" stroke-linejoin="round"/></svg><svg class="i" style="left:403.00px;top:477.44px;" width="28" height="28" viewBox="0 0 28 28"><path d="M5.9 3.4 H16.3 L22.8 9.9 V24.8 H5.9 Z" fill="#fff" stroke="#c9c9c9" stroke-width="1.3" stroke-linejoin="round"/>
<path d="M16.3 3.4 V9.9 H22.8 Z" fill="#e6e6e6" stroke="#c9c9c9" stroke-width="1.3" stroke-linejoin="round"/>
<g stroke-width="1.3" stroke-linecap="round">
<line x1="9.7" y1="10.1" x2="13.2" y2="10.1" stroke="#666"/><line x1="9.7" y1="13.7" x2="18.8" y2="13.7" stroke="#555"/>
<line x1="9.7" y1="17.4" x2="18.8" y2="17.4" stroke="#111"/><line x1="9.7" y1="20.5" x2="18.8" y2="20.5" stroke="#444"/></g></svg><div class="t" style="left:434.00px;top:484px;font-size:18.5px;line-height:18.5px;letter-spacing:0.276px;color:#1e1e1e;">Dogs and Cats and Their Relationships with Humans as Depicted in Picture …</div><div class="t" style="left:1121.30px;top:484px;font-size:18.5px;line-height:18.5px;letter-spacing:0.116px;color:#1e1e1e;">Shimatani and Koda</div><svg class="i" style="left:403.00px;top:516.97px;" width="28" height="28" viewBox="0 0 28 28"><path d="M5.6 21.6 L8.4 24.8 H23.4 V7.8 Q23.4 6.8 22.4 6.8 H20.5" fill="#fff" stroke="#3465ee" stroke-width="1.35" stroke-linejoin="round"/>
<rect x="5.4" y="3.6" width="15.1" height="18.7" rx="1.3" fill="#b5c6f3" stroke="#2c5ff0" stroke-width="1.4"/>
<rect x="6.3" y="4.4" width="1.6" height="17.1" fill="#dfe6fb"/>
<line x1="8.4" y1="4.2" x2="8.4" y2="21.7" stroke="#3a6bf0" stroke-width="1.2"/></svg><div class="t" style="left:434.00px;top:523px;font-size:18.5px;line-height:18.5px;letter-spacing:0.36px;color:#1e1e1e;">Canis Modernis: Human/Dog Coevolution in Modernist Literature</div><div class="t" style="left:1121.30px;top:523px;font-size:18.5px;line-height:18.5px;letter-spacing:0.512px;color:#1e1e1e;">Kendall-Morwick</div><div class="b" style="left:383.7px;top:551.10px;width:960px;height:39.2px;background:#f4f4f4;border-radius:7px"></div><svg class="i" style="left:389.60px;top:563.70px;" width="10" height="14" viewBox="0 0 10 14"><path d="M3.4000000000000004 2.4000000000000004 L8 7 L3.4000000000000004 11.6" fill="none" stroke="#6b6b6b" stroke-width="1.4" stroke-linecap="round" stroke-linejoin="round"/></svg><svg class="i" style="left:403.00px;top:556.50px;" width="28" height="28" viewBox="0 0 28 28"><path d="M5.9 3.4 H16.3 L22.8 9.9 V24.8 H5.9 Z" fill="#fff" stroke="#c9c9c9" stroke-width="1.3" stroke-linejoin="round"/>
<path d="M16.3 3.4 V9.9 H22.8 Z" fill="#e6e6e6" stroke="#c9c9c9" stroke-width="1.3" stroke-linejoin="round"/>
<g stroke-width="1.3" stroke-linecap="round">
<line x1="9.7" y1="10.1" x2="13.2" y2="10.1" stroke="#666"/><line x1="9.7" y1="13.7" x2="18.8" y2="13.7" stroke="#555"/>
<line x1="9.7" y1="17.4" x2="18.8" y2="17.4" stroke="#111"/><line x1="9.7" y1="20.5" x2="18.8" y2="20.5" stroke="#444"/></g></svg><div class="t" style="left:434.00px;top:563px;font-size:18.5px;line-height:18.5px;letter-spacing:0.246px;color:#1e1e1e;">True love and the nonhuman: Shakespeare's dog Crab and the animal/huma…</div><div class="t" style="left:1121.30px;top:563px;font-size:18.5px;line-height:18.5px;letter-spacing:0.569px;color:#1e1e1e;">Kordecki</div><svg class="i" style="left:389.60px;top:603.23px;" width="10" height="14" viewBox="0 0 10 14"><path d="M3.4000000000000004 2.4000000000000004 L8 7 L3.4000000000000004 11.6" fill="none" stroke="#6b6b6b" stroke-width="1.4" stroke-linecap="round" stroke-linejoin="round"/></svg><svg class="i" style="left:403.00px;top:596.03px;" width="28" height="28" viewBox="0 0 28 28"><path d="M6.5 8.6 H4.8 Q3.4 8.6 3.4 10 V21.7 Q3.4 23.7 5.4 23.7 H6.5" fill="#dedede" stroke="#777" stroke-width="1.3"/>
<path d="M6.5 5.4 H25.2 V21.7 Q25.2 23.7 23.2 23.7 H5.4 Q6.5 23.4 6.5 21.7 Z" fill="#fff" stroke="#777" stroke-width="1.3" stroke-linejoin="round"/>
<rect x="9.8" y="8.9" width="12.3" height="2.8" rx="0.5" fill="#b7c8f6" stroke="#1b56e2" stroke-width="1.25"/>
<rect x="9.8" y="14.5" width="5.6" height="3" rx="0.4" fill="#c4e2ff" stroke="#3aa0ff" stroke-width="1.2"/>
<g stroke-width="1.2" stroke-linecap="round"><line x1="17.5" y1="14.6" x2="22.5" y2="14.6" stroke="#666"/><line x1="17.5" y1="17.4" x2="22.5" y2="17.4" stroke="#444"/></g>
<line x1="9.5" y1="20.2" x2="22.6" y2="20.2" stroke="#999" stroke-width="1.5"/></svg><div class="t" style="left:434.00px;top:602px;font-size:18.5px;line-height:18.5px;letter-spacing:0.476px;color:#1e1e1e;">A Dog’s Box-Office Journey</div><div class="t" style="left:1121.30px;top:602px;font-size:18.5px;line-height:18.5px;letter-spacing:-0.026px;color:#1e1e1e;">Wakeman</div><div class="b" style="left:383.7px;top:630.16px;width:960px;height:39.2px;background:#f4f4f4;border-radius:7px"></div><svg class="i" style="left:403.00px;top:634.96px;" width="28" height="28" viewBox="0 0 28 28"><path d="M14.2 5.9 Q9.5 4.3 4.3 4.5 V22.7 Q9.5 22.6 14.2 24.5 Z" fill="#b5c6f3" stroke="#3465ee" stroke-width="1.35" stroke-linejoin="round"/>
<path d="M14.2 5.9 Q19 4.3 24.5 4.5 V22.7 Q19 22.6 14.2 24.5 Z" fill="#fff" stroke="#3465ee" stroke-width="1.35" stroke-linejoin="round"/>
<g stroke="#1a1a1a" stroke-width="1.4" stroke-linecap="round">
<line x1="17.2" y1="9" x2="21.7" y2="8.4"/><line x1="17.2" y1="12" x2="21.7" y2="11.4"/>
<line x1="17.2" y1="15" x2="21.7" y2="14.4"/><line x1="17.2" y1="18" x2="21.7" y2="17.4"/></g></svg><div class="t" style="left:434.00px;top:642px;font-size:18.5px;line-height:18.5px;letter-spacing:0.411px;color:#1e1e1e;">“When Your Dog Matches Your Decor”: Object Agency of Living and Non-Li…</div><div class="t" style="left:1121.30px;top:642px;font-size:18.5px;line-height:18.5px;letter-spacing:0.34px;color:#1e1e1e;">Syrjälä and Norrgrann</div><svg class="i" style="left:389.60px;top:682.29px;" width="10" height="14" viewBox="0 0 10 14"><path d="M3.4000000000000004 2.4000000000000004 L8 7 L3.4000000000000004 11.6" fill="none" stroke="#6b6b6b" stroke-width="1.4" stroke-linecap="round" stroke-linejoin="round"/></svg><svg class="i" style="left:403.00px;top:675.09px;" width="28" height="28" viewBox="0 0 28 28"><path d="M5.6 21.6 L8.4 24.8 H23.4 V7.8 Q23.4 6.8 22.4 6.8 H20.5" fill="#fff" stroke="#3465ee" stroke-width="1.35" stroke-linejoin="round"/>
<rect x="5.4" y="3.6" width="15.1" height="18.7" rx="1.3" fill="#b5c6f3" stroke="#2c5ff0" stroke-width="1.4"/>
<rect x="6.3" y="4.4" width="1.6" height="17.1" fill="#dfe6fb"/>
<line x1="8.4" y1="4.2" x2="8.4" y2="21.7" stroke="#3a6bf0" stroke-width="1.2"/></svg><div class="t" style="left:434.00px;top:681px;font-size:18.5px;line-height:18.5px;letter-spacing:0.417px;color:#1e1e1e;">In Dogs We Trust: An Anthology of American Dog Literature</div><div class="t" style="left:1121.30px;top:681px;font-size:18.5px;line-height:18.5px;letter-spacing:0.11px;color:#1e1e1e;">Ill and Makala</div><div class="b" style="left:383.7px;top:709.22px;width:960px;height:39.2px;background:#f4f4f4;border-radius:7px"></div><svg class="i" style="left:389.60px;top:721.82px;" width="10" height="14" viewBox="0 0 10 14"><path d="M3.4000000000000004 2.4000000000000004 L8 7 L3.4000000000000004 11.6" fill="none" stroke="#6b6b6b" stroke-width="1.4" stroke-linecap="round" stroke-linejoin="round"/></svg><svg class="i" style="left:403.00px;top:714.62px;" width="28" height="28" viewBox="0 0 28 28"><path d="M6.5 8.6 H4.8 Q3.4 8.6 3.4 10 V21.7 Q3.4 23.7 5.4 23.7 H6.5" fill="#dedede" stroke="#777" stroke-width="1.3"/>
<path d="M6.5 5.4 H25.2 V21.7 Q25.2 23.7 23.2 23.7 H5.4 Q6.5 23.4 6.5 21.7 Z" fill="#fff" stroke="#777" stroke-width="1.3" stroke-linejoin="round"/>
<rect x="9.8" y="8.9" width="12.3" height="2.8" rx="0.5" fill="#b7c8f6" stroke="#1b56e2" stroke-width="1.25"/>
<rect x="9.8" y="14.5" width="5.6" height="3" rx="0.4" fill="#c4e2ff" stroke="#3aa0ff" stroke-width="1.2"/>
<g stroke-width="1.2" stroke-linecap="round"><line x1="17.5" y1="14.6" x2="22.5" y2="14.6" stroke="#666"/><line x1="17.5" y1="17.4" x2="22.5" y2="17.4" stroke="#444"/></g>
<line x1="9.5" y1="20.2" x2="22.6" y2="20.2" stroke="#999" stroke-width="1.5"/></svg><div class="t" style="left:434.00px;top:721px;font-size:18.5px;line-height:18.5px;letter-spacing:0.278px;color:#1e1e1e;">Why Are There So Many Books About Dogs?</div><div class="t" style="left:1121.30px;top:721px;font-size:18.5px;line-height:18.5px;letter-spacing:0.215px;color:#1e1e1e;">Hare and Woods</div><svg class="i" style="left:389.60px;top:761.35px;" width="10" height="14" viewBox="0 0 10 14"><path d="M3.4000000000000004 2.4000000000000004 L8 7 L3.4000000000000004 11.6" fill="none" stroke="#6b6b6b" stroke-width="1.4" stroke-linecap="round" stroke-linejoin="round"/></svg><svg class="i" style="left:403.00px;top:754.15px;" width="28" height="28" viewBox="0 0 28 28"><path d="M5.9 3.4 H16.3 L22.8 9.9 V24.8 H5.9 Z" fill="#fff" stroke="#c9c9c9" stroke-width="1.3" stroke-linejoin="round"/>
<path d="M16.3 3.4 V9.9 H22.8 Z" fill="#e6e6e6" stroke="#c9c9c9" stroke-width="1.3" stroke-linejoin="round"/>
<g stroke-width="1.3" stroke-linecap="round">
<line x1="9.7" y1="10.1" x2="13.2" y2="10.1" stroke="#666"/><line x1="9.7" y1="13.7" x2="18.8" y2="13.7" stroke="#555"/>
<line x1="9.7" y1="17.4" x2="18.8" y2="17.4" stroke="#111"/><line x1="9.7" y1="20.5" x2="18.8" y2="20.5" stroke="#444"/></g></svg><div class="t" style="left:434.00px;top:760px;font-size:18.5px;line-height:18.5px;letter-spacing:0.382px;color:#1e1e1e;">Dickens's Talking Dogs: Allegories of Animal Voice in the Victorian Novel</div><div class="t" style="left:1121.30px;top:760px;font-size:18.5px;line-height:18.5px;letter-spacing:0.34px;color:#1e1e1e;">Cohn</div></div>
</body></html>
